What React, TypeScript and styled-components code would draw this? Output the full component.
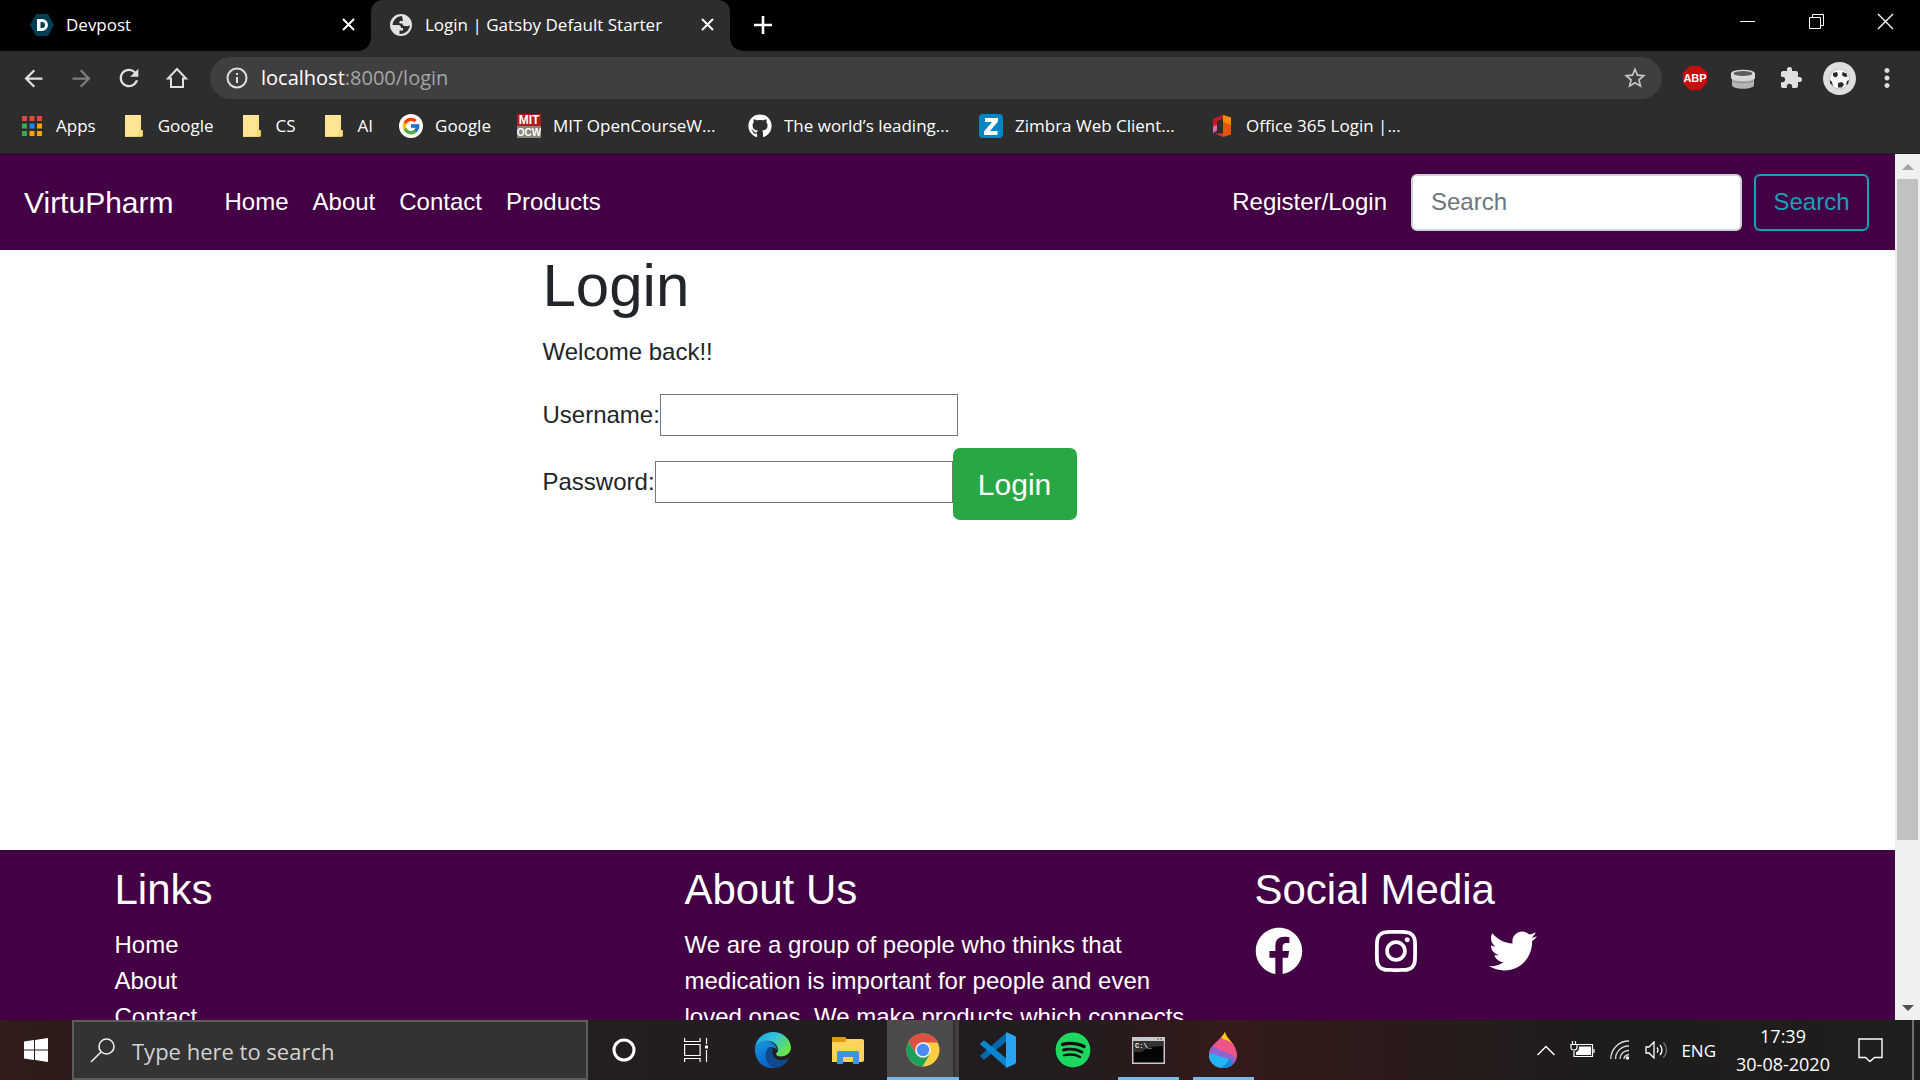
import React from "react";
import styled, { createGlobalStyle, css } from "styled-components";
import { FaFacebook, FaInstagram, FaTwitter, FaGithub, FaSpotify } from "react-icons/fa";
import { FcGoogle } from "react-icons/fc";
import { MdArrowBack, MdArrowForward, MdRefresh, MdStarBorder, MdExtension, MdMoreVert } from "react-icons/md";

const ui = `"Segoe UI", "Open Sans", "Noto Sans", sans-serif`;
const web = `"Liberation Sans", Arial, sans-serif`;

const Global = createGlobalStyle`
  *, *::before, *::after { box-sizing: border-box; }
  body { margin: 0; overflow: hidden; }
  button, input { font: inherit; color: inherit; margin: 0; }
  a { color: inherit; text-decoration: none; }
  svg { display: block; flex: none; }
`;

const Desktop = styled.div`
  display: flex;
  flex-direction: column;
  height: 100vh;
  font-family: ${ui};
`;

const PlainButton = styled.button`
  display: flex;
  align-items: center;
  justify-content: center;
  padding: 0;
  border: 0;
  background: none;
  color: #fff;
`;

/* ---------- tab strip ---------- */
const TabStrip = styled.div`
  display: flex;
  flex: none;
  height: 51px;
  padding-left: 12px;
  background: #000;
  color: #fff;
`;

const Tab = styled.div<{ $active?: boolean }>`
  position: relative;
  display: flex;
  align-items: center;
  gap: 12px;
  width: 359px;
  padding: 0 11px 2px 18px;
  font-size: 17px;
  line-height: 24px;
  white-space: nowrap;
  ${(p) =>
    p.$active &&
    css`
      background: #2d2d2d;
      border-radius: 12px 12px 0 0;
      &::before,
      &::after {
        content: "";
        position: absolute;
        bottom: 0;
        width: 12px;
        height: 12px;
      }
      &::before {
        right: 100%;
        background: radial-gradient(circle at 0 0, transparent 11px, #2d2d2d 12px);
      }
      &::after {
        left: 100%;
        background: radial-gradient(circle at 100% 0, transparent 11px, #2d2d2d 12px);
      }
    `}
`;

const TabTitle = styled.span`
  flex: 1;
`;

const TabClose = styled(PlainButton)`
  width: 24px;
  height: 24px;
`;

const NewTab = styled(PlainButton)`
  width: 42px;
  margin-left: 12px;
  padding-bottom: 2px;
`;

const WindowControls = styled.div`
  display: flex;
  height: 42px;
  margin-left: auto;
`;

const WindowButton = styled(PlainButton)`
  width: 69px;
`;

/* ---------- toolbar ---------- */
const Toolbar = styled.div`
  display: flex;
  flex: none;
  align-items: center;
  height: 54px;
  padding: 0 9px;
  background: #2d2d2d;
`;

const ToolButton = styled(PlainButton)<{ $dim?: boolean }>`
  width: 48px;
  height: 42px;
  color: ${(p) => (p.$dim ? "#7d7d7d" : "#e0e0e0")};
`;

const Omnibox = styled.div`
  display: flex;
  flex: 1;
  align-items: center;
  height: 42px;
  margin: 0 9px;
  padding: 0 3px 0 15px;
  border-radius: 21px;
  background: #3f3f3f;
`;

const Address = styled.a`
  flex: 1;
  padding-left: 12px;
  font-size: 20px;
  line-height: 30px;
  color: #a6a6a6;
  b {
    font-weight: 400;
    color: #fff;
  }
`;

/* ---------- bookmarks ---------- */
const Bookmarks = styled.nav`
  display: flex;
  flex: none;
  gap: 26px;
  height: 49px;
  padding: 0 20px 6px;
  align-items: center;
  background: #2d2d2d;
  border-bottom: 1px solid #222;
  color: #fff;
  font-size: 17px;
  line-height: 24px;
`;

const Bookmark = styled.a<{ $long?: boolean }>`
  display: flex;
  align-items: center;
  gap: 12px;
  white-space: nowrap;
  span {
    width: ${(p) => (p.$long ? "169px" : "auto")};
  }
`;

/* ---------- page ---------- */
const Viewport = styled.div`
  display: flex;
  flex: 1;
  min-height: 0;
  background: #fff;
`;

const Page = styled.div`
  flex: 1;
  overflow: hidden;
  font-family: ${web};
  font-size: 24px;
  line-height: 36px;
  color: #212529;
`;

const Navbar = styled.header`
  display: flex;
  align-items: center;
  min-height: 96px;
  padding: 0 26px 0 24px;
  background: #440044;
  color: #fff;
`;

const Brand = styled.a`
  margin-right: 39px;
  font-size: 30px;
  line-height: 45px;
`;

const NavLinks = styled.nav`
  display: flex;
  flex: 1;
`;

const NavLink = styled.a`
  padding: 12px;
`;

const SearchForm = styled.form`
  display: flex;
  gap: 12px;
  margin-left: 12px;
`;

const SearchInput = styled.input`
  width: 331px;
  height: 57px;
  padding: 0 18px;
  border: 2px solid #ced4da;
  border-radius: 6px;
  background: #fff;
  &::placeholder {
    color: #6c757d;
    opacity: 1;
  }
`;

const SearchButton = styled.button`
  width: 115px;
  height: 57px;
  padding: 0;
  border: 2px solid #17a2b8;
  border-radius: 6px;
  background: transparent;
  color: #17a2b8;
`;

const Main = styled.main`
  width: 100%;
  max-width: 810px;
  min-height: 600px;
  margin: 0 auto;
`;

const Title = styled.h1`
  margin: 0 0 12px;
  font-size: 60px;
  font-weight: 500;
  line-height: 72px;
`;

const Paragraph = styled.p`
  margin: 0 0 24px;
`;

const Field = styled.label`
  display: inline-block;
  margin-bottom: 12px;
`;

const FieldInput = styled.input`
  width: 298px;
  height: 42px;
  padding: 2px;
  border: 1px solid #767676;
  background: #fff;
`;

const LoginButton = styled.button`
  width: 124px;
  height: 72px;
  padding: 0;
  border: 0;
  border-radius: 7px;
  background: #28a745;
  color: #fff;
  font-size: 30px;
  line-height: 45px;
  vertical-align: middle;
`;

const Footer = styled.footer`
  background: #440044;
  color: #fff;
`;

const FooterGrid = styled.div`
  display: grid;
  grid-template-columns: repeat(3, 1fr);
  width: 100%;
  max-width: 1710px;
  margin: 0 auto;
  padding-top: 15px;
`;

const FooterColumn = styled.section`
  padding: 0 22px;
`;

const FooterTitle = styled.h2`
  margin: 0 0 12px;
  font-size: 42px;
  font-weight: 500;
  line-height: 50px;
`;

const FooterList = styled.ul`
  margin: 0;
  padding: 0;
  list-style: none;
`;

const Socials = styled.div`
  display: flex;
  gap: 69px;
`;

/* ---------- scroll bar ---------- */
const Scrollbar = styled.div`
  display: flex;
  flex: none;
  flex-direction: column;
  width: 25px;
  background: #f0f0f0;
`;

const ScrollArrow = styled(PlainButton)<{ $tone: string }>`
  height: 25px;
  color: ${(p) => p.$tone};
`;

const ScrollTrack = styled.div`
  flex: 1;
  padding: 0 2px;
`;

const ScrollThumb = styled.div`
  height: 81%;
  background: #c1c1c1;
`;

/* ---------- taskbar ---------- */
const Taskbar = styled.div`
  display: flex;
  flex: none;
  height: 60px;
  color: #fff;
  background: linear-gradient(90deg, #301d1b 0, #2c1b1a 4%, #231e1f 30%, #211d1e 54%, #2c1b1b 60%, #331b1a 64%, #2b1b1a 72%, #1f1c1c 82%, #1e1e1d 100%);
`;

const StartButton = styled(PlainButton)`
  width: 72px;
`;

const TaskSearch = styled.label`
  display: flex;
  align-items: center;
  gap: 17px;
  width: 516px;
  padding: 0 16px;
  border: 2px solid #5c5c5c;
  background: #333;
`;

const TaskSearchInput = styled.input`
  flex: 1;
  min-width: 0;
  padding: 2px 0 0;
  border: 0;
  background: none;
  font-size: 22px;
  line-height: 30px;
  &::placeholder {
    color: #d2d2d2;
    opacity: 1;
  }
`;

const TaskButton = styled(PlainButton)`
  width: 72px;
`;

const Apps = styled.div`
  display: flex;
  gap: 3px;
  margin-left: 5px;
`;

const AppButton = styled(PlainButton)<{ $state?: "open" | "active" }>`
  width: 72px;
  ${(p) =>
    p.$state === "open" &&
    css`
      background: linear-gradient(#76b9ed, #76b9ed) center bottom / 61px 3px no-repeat;
    `}
  ${(p) =>
    p.$state === "active" &&
    css`
      background: linear-gradient(#76b9ed, #76b9ed) center bottom / 100% 3px no-repeat,
        linear-gradient(90deg, #4d4a4a 66px, #333030 66px, #333030 68px, #413e3e 68px);
    `}
`;

const Tray = styled.div`
  display: flex;
  align-items: center;
  gap: 12px;
  margin-left: auto;
`;

const TrayButton = styled(PlainButton)`
  min-width: 25px;
  height: 60px;
  font-size: 17px;
`;

const Clock = styled(PlainButton)`
  flex-direction: column;
  width: 110px;
  margin-right: 8px;
  font-size: 18px;
  line-height: 28px;
`;

const ShowDesktop = styled(PlainButton)`
  width: 8px;
  height: 60px;
  margin-left: 17px;
  border-left: 2px solid #6d6d6d;
`;

/* ---------- drawings ---------- */
const Cross = ({ size, stroke }: { size: number; stroke: number }) => (
  <svg width={size} height={size} viewBox={`0 0 ${size} ${size}`} stroke="currentColor" strokeWidth={stroke}>
    <path d={`M1 1L${size - 1} ${size - 1}M${size - 1} 1L1 ${size - 1}`} />
  </svg>
);

const DevpostIcon = () => (
  <svg width="24" height="24" viewBox="0 0 24 24">
    <path d="M6 1h12l6 11-6 11H6L0 12z" fill="#003e54" />
    <path d="M7 6h5a6 6 0 0 1 0 12H7zM10.500 9v6H12a3 3 0 0 0 0-6z" fill="#fff" fillRule="evenodd" />
  </svg>
);

const GlobeIcon = () => (
  <svg width="24" height="24" viewBox="0 0 24 24">
    <circle cx="12" cy="12" r="11" fill="#e2e2e2" />
    <path d="M13 3C8 3 4 7 3.500 12h5.500c2 0 3 1 3 3h2v2.500h-3.500V21c5 .5 10-3.500 10.500-9-1 1-2 1.500-3.500 1h-2c-1.500 0-2-1-2-2.500h-3V8h3.500z" fill="#2d2d2d" />
  </svg>
);

const HomeIcon = () => (
  <svg width="24" height="24" viewBox="0 0 24 24" fill="none" stroke="currentColor" strokeWidth="2">
    <path d="M12 3L3 12.500H6V21H18V12.500H21Z" />
  </svg>
);

const InfoIcon = () => (
  <svg width="24" height="24" viewBox="0 0 24 24" fill="none" stroke="#e0e0e0" strokeWidth="2">
    <circle cx="12" cy="12" r="9.500" />
    <path d="M12 11v6M12 7v2" />
  </svg>
);

const AbpIcon = () => (
  <svg width="24" height="24" viewBox="0 0 24 24">
    <path d="M7 0h10l7 7v10l-7 7H7l-7-7V7z" fill="#c70d0d" />
    <text x="12" y="16" fontSize="11" fontWeight="700" textAnchor="middle" fill="#fff" fontFamily="Liberation Sans, sans-serif">ABP</text>
  </svg>
);

const PotIcon = () => (
  <svg width="24" height="24" viewBox="0 0 24 24">
    <path d="M1 10h22v9c0 5-22 5-22 0z" fill="#b5b5b5" />
    <path d="M0 7v5c0 4 24 4 24 0V7z" fill="#d6d6d6" />
    <ellipse cx="12" cy="7.500" rx="12" ry="3.800" fill="#dcdcdc" />
    <ellipse cx="12" cy="7.500" rx="9.500" ry="2.500" fill="#5c5c5c" />
    <path d="M1.500 15c3 2 18 2 21 0" stroke="#8b8b8b" fill="none" />
  </svg>
);

const BallIcon = () => (
  <svg width="33" height="33" viewBox="0 0 33 33">
    <circle cx="16.500" cy="16.500" r="16.500" fill="#dedede" />
    <circle cx="16.500" cy="17" r="10" fill="#f7f7f7" stroke="#c4c4c4" />
    <path d="M10 11l4-1 1 3-2 2.500-3-1.500zM19.500 10l4 1.500 1 3-3 .5-2.500-2zM15 21l4-1 2 2.500-2 3h-4zM7 18l2 2 1 4-3-3zM26 18l-1 4-2 1 1-4z" fill="#2b2b2b" />
  </svg>
);

const AppsIcon = () => {
  const tones = ["#e8453c", "#e8453c", "#e8453c", "#3aa757", "#1a88f0", "#f5a400", "#3aa757", "#f5a400", "#f5a400"];
  return (
    <svg width="24" height="24" viewBox="0 0 24 24">
      {tones.map((tone, i) => (
        <rect key={i} x={2 + (i % 3) * 7.5} y={2 + Math.floor(i / 3) * 7.5} width="5" height="5" fill={tone} />
      ))}
    </svg>
  );
};

const FolderIcon = () => (
  <svg width="24" height="24" viewBox="0 0 24 24">
    <path d="M3 1h16v15l2 1v5l-2 1H3z" fill="#ffe38f" />
    <path d="M3 22.500h14v-5l2-1.500h2v6l-2 1H3z" fill="#e9c04b" />
    <path d="M17.500 17h2.500v5h-2.500z" fill="#ffdf80" />
    <path d="M3 1h13v20H3z" fill="#ffe595" />
  </svg>
);

const GoogleDisc = styled.i`
  display: flex;
  align-items: center;
  justify-content: center;
  width: 24px;
  height: 24px;
  border-radius: 50%;
  background: #fff;
`;

const MitIcon = () => (
  <svg width="24" height="24" viewBox="0 0 24 24" fontFamily="Liberation Sans, sans-serif" fontWeight="700" fontSize="12" textAnchor="middle">
    <path d="M0 0h24v12H0z" fill="#b31b1b" />
    <path d="M0 12h24v12H0z" fill="#8b8579" />
    <text x="12" y="10" fill="#fff">MIT</text>
    <text x="12" y="22" fontSize="10" fill="#fff">OCW</text>
  </svg>
);

const ZimbraIcon = () => (
  <svg width="24" height="24" viewBox="0 0 24 24">
    <rect width="24" height="24" rx="4" fill="#0087c3" />
    <path d="M6 4h13v3.500L11 17h7.500v4H5v-3.500L13 8H6z" fill="#fff" />
  </svg>
);

const OfficeIcon = () => (
  <svg width="24" height="24" viewBox="0 0 24 24">
    <path d="M13 1L3 5v14l4-2.500V7l6-2z" fill="#c3182a" />
    <path d="M3 12v7l4-2.500V11z" fill="#d36bb0" />
    <path d="M13 1l8 2.500v17L13 23V5z" fill="#e6550d" />
    <path d="M13 1l8 2.500V11l-8-3z" fill="#f58a07" />
    <path d="M5 19.500h8V23z" fill="#e0303a" />
  </svg>
);

const Triangle = ({ down }: { down?: boolean }) => (
  <svg width="12" height="6" viewBox="0 0 12 6" fill="currentColor">
    <path d={down ? "M0 0h12L6 6z" : "M0 6h12L6 0z"} />
  </svg>
);

const WindowsIcon = () => (
  <svg width="24" height="24" viewBox="0 0 24 24" fill="#fff">
    <path d="M0 3.400L10 2v9.500H0zM11 1.900L24 0v11.500H11zM0 12.500h10V22L0 20.600zM11 12.500h13V24l-13-1.900z" />
  </svg>
);

const LensIcon = () => (
  <svg width="25" height="25" viewBox="0 0 25 25" fill="none" stroke="#eee" strokeWidth="1.600">
    <circle cx="16.500" cy="8.500" r="7.500" />
    <path d="M11 14L1 24" />
  </svg>
);

const CortanaIcon = () => (
  <svg width="24" height="24" viewBox="0 0 24 24" fill="none" stroke="#fff" strokeWidth="3">
    <circle cx="12" cy="12" r="10" />
  </svg>
);

const TaskViewIcon = () => (
  <svg width="24" height="24" viewBox="0 0 24 24" fill="none" stroke="#fff" strokeWidth="1.200">
    <path d="M.6 0v3.500h15.500V0M.6 6.500h15.500v11H.6zM.6 24v-3.500h15.500V24M22.500 0v6M22.500 12v12" />
    <path d="M21 7.500h3v3h-3z" fill="#fff" stroke="none" />
  </svg>
);

const EdgeIcon = () => (
  <svg width="36" height="36" viewBox="0 0 36 36">
    <defs>
      <linearGradient id="edgeTop" x1="0" y1="0" x2="1" y2="0.600">
        <stop offset="0" stopColor="#1f9be0" />
        <stop offset=".5" stopColor="#33c3dc" />
        <stop offset="1" stopColor="#6be545" />
      </linearGradient>
      <linearGradient id="edgeBody" x1="0" y1="0" x2=".4" y2="1">
        <stop offset="0" stopColor="#1a9ae0" />
        <stop offset="1" stopColor="#0562c4" />
      </linearGradient>
    </defs>
    <path d="M0 16C3 10 9 8 14 9c6 1 9 5 9 9 0 2-2 3-2 4 0 4 15 4 15-7C35 6 27 0 18 0 8 0 1 7 0 16z" fill="url(#edgeTop)" />
    <path d="M0 17C2 9 10 7 16 10c4 2 6 5 6 8-4-5-10-3-11 3-1 7 4 14 10 15C9 38 0 29 0 18z" fill="url(#edgeBody)" />
    <path d="M14 15c-6 5-4 17 5 21 6 0 11-3 14-8 1-1 0-2-1-1-9 4-17-3-14-9 0-1-2-3-4-3z" fill="#114a8b" />
  </svg>
);

const ExplorerIcon = () => (
  <svg width="32" height="27" viewBox="0 0 32 27">
    <path d="M0 1q0-1 1-1h12l3 3v5H0z" fill="#e09c0b" />
    <path d="M0 5h13l2-3h15q2 0 2 2v19q0 2-2 2H0z" fill="#ffd35c" />
    <path d="M5 27V16q0-2 2-2h18q2 0 2 2v11h-6v-7H11v7z" fill="#3b96dd" />
  </svg>
);

const ChromeIcon = () => (
  <svg width="34" height="34" viewBox="0 0 34 34">
    <circle cx="17" cy="17" r="16.500" fill="#ffcd40" />
    <path d="M2.700 8.800L9.500 20.500 17 17V9.500H31.700A16.500 16.500 0 0 0 2.700 8.800z" fill="#dd5144" />
    <path d="M2.700 8.800L9.500 20.500 17 17 24.300 20.500 16.500 33.500A16.500 16.500 0 0 1 2.700 8.800z" fill="#1aa15f" />
    <circle cx="17" cy="17" r="7.800" fill="#f4f4f4" />
    <circle cx="17" cy="17" r="6.200" fill="#4c8bf5" />
  </svg>
);

const CodeIcon = () => (
  <svg width="36" height="36" viewBox="0 0 36 36">
    <path d="M0 24l3 3q1 1 2 0L27 9V0L1 23q-1 0-1 1z" fill="#0069ad" />
    <path d="M0 12l3-3q1-1 2 0l22 18v9L1 13q-1 0-1-1z" fill="#0a86d1" />
    <path d="M26 0l9 4q1 1 1 2v24q0 1-1 2l-9 4z" fill="#27a4f2" />
  </svg>
);

const SpotifyDisc = styled.i`
  display: flex;
  border-radius: 50%;
  background: #111;
  color: #1ed760;
`;

const TerminalIcon = () => (
  <svg width="33" height="27" viewBox="0 0 33 27">
    <path d="M0 0h33v27H0z" fill="#c9c9cd" />
    <path d="M1.500 4h30v21.500h-30z" fill="#050505" />
    <path d="M1.500 4h30v5q-16 0-22 6h-8z" fill="#333" />
    <path d="M25 2h2M28 2h2" stroke="#555" />
    <text x="3" y="11" fontSize="7" fontWeight="700" fill="#eee" fontFamily="Liberation Mono, monospace">C:\_</text>
  </svg>
);

const PaintIcon = () => (
  <svg width="28" height="36" viewBox="0 0 28 36">
    <defs>
      <clipPath id="drop">
        <path d="M16 0c1 7 12 12 12 23a14 13 0 0 1-28 0C0 13 12 8 16 0z" />
      </clipPath>
    </defs>
    <g clipPath="url(#drop)">
      <path d="M0 0h28v36H0z" fill="#ee5487" />
      <path d="M8 0h20v18q-3-8-14-11z" fill="#fccf0a" />
      <path d="M0 15q4-3 6 0c5 5 18 4 22 14v7H0z" fill="#9162ce" />
      <path d="M0 22c5-2 8 2 13 3s10 1 9 11H0z" fill="#24b4f1" />
      <path d="M10 36q9-3 10-10l8 10z" fill="#1688dc" />
    </g>
  </svg>
);

const BatteryIcon = () => (
  <svg width="25" height="18" viewBox="0 0 25 18" fill="none" stroke="#fff" strokeWidth="1.200">
    <path d="M7 3.500h15.500v12H4V10M24 8v4" />
    <path d="M9 5.500h12v8.500H6v-3q3-1 3-4z" fill="#fff" stroke="none" />
    <path d="M2.500 0v3M5.500 0v3M1 3.500h6v3Q7 9 4 9T1 6.500z" />
  </svg>
);

const WifiIcon = () => (
  <svg width="20" height="20" viewBox="0 0 20 20" fill="none" stroke="#ddd" strokeWidth="1.300">
    <path d="M.8 19A18 18 0 0 1 19 1M5.500 19A13 13 0 0 1 19 6M10 19A8.500 8.500 0 0 1 19 10.500M14 19Q14 15.500 19 14.500" />
    <circle cx="17.500" cy="18" r="1.700" fill="#fff" stroke="none" />
  </svg>
);

const VolumeIcon = () => (
  <svg width="23" height="18" viewBox="0 0 23 18" fill="none" stroke="#fff" strokeWidth="1.300">
    <path d="M1 6h3l5-5v16l-5-5H1zM12 6.500q2 2.500 0 5M15 4q4 5 0 10" />
    <path d="M18.500 1.500q6 7.500 0 15" stroke="#777" />
  </svg>
);

const NoticeIcon = () => (
  <svg width="25" height="25" viewBox="0 0 25 25" fill="none" stroke="#fff" strokeWidth="1.400">
    <path d="M1 1h23v18.500h-7.500L12 23.500 7.500 19.500H1z" />
  </svg>
);

const bookmarks = [
  { label: "Apps", icon: <AppsIcon /> },
  { label: "Google", icon: <FolderIcon /> },
  { label: "CS", icon: <FolderIcon /> },
  { label: "AI", icon: <FolderIcon /> },
  { label: "Google", icon: <GoogleDisc><FcGoogle size={20} /></GoogleDisc> },
  { label: "MIT OpenCourseW...", icon: <MitIcon />, long: true },
  { label: "The world’s leading...", icon: <FaGithub size={24} />, long: true },
  { label: "Zimbra Web Client...", icon: <ZimbraIcon />, long: true },
  { label: "Office 365 Login |...", icon: <OfficeIcon />, long: true },
];

const apps: { name: string; icon: React.ReactNode; state?: "open" | "active" }[] = [
  { name: "Edge", icon: <EdgeIcon /> },
  { name: "File Explorer", icon: <ExplorerIcon /> },
  { name: "Chrome", icon: <ChromeIcon />, state: "active" },
  { name: "Visual Studio Code", icon: <CodeIcon /> },
  { name: "Spotify", icon: <SpotifyDisc><FaSpotify size={36} /></SpotifyDisc> },
  { name: "Command Prompt", icon: <TerminalIcon />, state: "open" },
  { name: "Paint 3D", icon: <PaintIcon />, state: "open" },
];

export default function App() {
  return (
    <Desktop>
      <Global />
      <TabStrip>
        <Tab>
          <DevpostIcon />
          <TabTitle>Devpost</TabTitle>
          <TabClose aria-label="Close tab"><Cross size={13} stroke={2} /></TabClose>
        </Tab>
        <Tab $active>
          <GlobeIcon />
          <TabTitle>Login | Gatsby Default Starter</TabTitle>
          <TabClose aria-label="Close tab"><Cross size={13} stroke={2} /></TabClose>
        </Tab>
        <NewTab aria-label="New tab">
          <svg width="18" height="18" viewBox="0 0 18 18" stroke="#fff" strokeWidth="2.600">
            <path d="M9 0v18M0 9h18" />
          </svg>
        </NewTab>
        <WindowControls>
          <WindowButton aria-label="Minimize">
            <svg width="15" height="15" viewBox="0 0 15 15" fill="#fff"><path d="M0 7h15v1H0z" /></svg>
          </WindowButton>
          <WindowButton aria-label="Restore">
            <svg width="15" height="15" viewBox="0 0 15 15" fill="none" stroke="#fff">
              <path d="M.5 3.500h11v11H.5zM3.500 3.500v-3h11v11h-3" />
            </svg>
          </WindowButton>
          <WindowButton aria-label="Close"><Cross size={17} stroke={1.4} /></WindowButton>
        </WindowControls>
      </TabStrip>

      <Toolbar>
        <ToolButton aria-label="Back"><MdArrowBack size={27} /></ToolButton>
        <ToolButton aria-label="Forward" $dim><MdArrowForward size={27} /></ToolButton>
        <ToolButton aria-label="Reload"><MdRefresh size={28} /></ToolButton>
        <ToolButton aria-label="Home"><HomeIcon /></ToolButton>
        <Omnibox>
          <InfoIcon />
          <Address href="#"><b>localhost</b>:8000/login</Address>
          <ToolButton aria-label="Bookmark this tab"><MdStarBorder size={26} color="#c4c4c4" /></ToolButton>
        </Omnibox>
        <ToolButton aria-label="Adblock"><AbpIcon /></ToolButton>
        <ToolButton aria-label="Extension"><PotIcon /></ToolButton>
        <ToolButton aria-label="Extensions"><MdExtension size={24} /></ToolButton>
        <ToolButton aria-label="Profile"><BallIcon /></ToolButton>
        <ToolButton aria-label="Menu"><MdMoreVert size={30} /></ToolButton>
      </Toolbar>

      <Bookmarks>
        {bookmarks.map((b, i) => (
          <Bookmark key={i} href="#" $long={b.long}>
            {b.icon}
            <span>{b.label}</span>
          </Bookmark>
        ))}
      </Bookmarks>

      <Viewport>
        <Page>
          <Navbar>
            <Brand href="#">VirtuPharm</Brand>
            <NavLinks>
              <NavLink href="#">Home</NavLink>
              <NavLink href="#">About</NavLink>
              <NavLink href="#">Contact</NavLink>
              <NavLink href="#">Products</NavLink>
            </NavLinks>
            <NavLink href="#">Register/Login</NavLink>
            <SearchForm onSubmit={(e) => e.preventDefault()}>
              <SearchInput type="search" placeholder="Search" aria-label="Search" />
              <SearchButton type="submit">Search</SearchButton>
            </SearchForm>
          </Navbar>

          <Main>
            <Title>Login</Title>
            <Paragraph>Welcome back!!</Paragraph>
            <form onSubmit={(e) => e.preventDefault()}>
              <Field>Username:<FieldInput type="text" name="username" /></Field>
              <br />
              <Field>Password:<FieldInput type="password" name="password" /></Field>
              <LoginButton type="submit">Login</LoginButton>
            </form>
          </Main>

          <Footer>
            <FooterGrid>
              <FooterColumn>
                <FooterTitle>Links</FooterTitle>
                <FooterList>
                  <li><a href="#">Home</a></li>
                  <li><a href="#">About</a></li>
                  <li><a href="#">Contact</a></li>
                </FooterList>
              </FooterColumn>
              <FooterColumn>
                <FooterTitle>About Us</FooterTitle>
                <Paragraph>
                  We are a group of people who thinks that medication is important for people and even loved ones. We make
                  products which connects
                </Paragraph>
              </FooterColumn>
              <FooterColumn>
                <FooterTitle>Social Media</FooterTitle>
                <Socials>
                  <a href="#" aria-label="Facebook"><FaFacebook size={48} /></a>
                  <a href="#" aria-label="Instagram"><FaInstagram size={48} /></a>
                  <a href="#" aria-label="Twitter"><FaTwitter size={48} /></a>
                </Socials>
              </FooterColumn>
            </FooterGrid>
          </Footer>
        </Page>
        <Scrollbar>
          <ScrollArrow aria-label="Scroll up" $tone="#a3a3a3"><Triangle /></ScrollArrow>
          <ScrollTrack><ScrollThumb /></ScrollTrack>
          <ScrollArrow aria-label="Scroll down" $tone="#505050"><Triangle down /></ScrollArrow>
        </Scrollbar>
      </Viewport>

      <Taskbar>
        <StartButton aria-label="Start"><WindowsIcon /></StartButton>
        <TaskSearch>
          <LensIcon />
          <TaskSearchInput type="text" placeholder="Type here to search" aria-label="Type here to search" />
        </TaskSearch>
        <TaskButton aria-label="Cortana"><CortanaIcon /></TaskButton>
        <TaskButton aria-label="Task view"><TaskViewIcon /></TaskButton>
        <Apps>
          {apps.map((a) => (
            <AppButton key={a.name} aria-label={a.name} $state={a.state}>{a.icon}</AppButton>
          ))}
        </Apps>
        <Tray>
          <TrayButton aria-label="Show hidden icons">
            <svg width="18" height="11" viewBox="0 0 18 11" fill="none" stroke="#fff" strokeWidth="1.500">
              <path d="M.5 10L9 1.500 17.500 10" />
            </svg>
          </TrayButton>
          <TrayButton aria-label="Battery"><BatteryIcon /></TrayButton>
          <TrayButton aria-label="Network"><WifiIcon /></TrayButton>
          <TrayButton aria-label="Volume"><VolumeIcon /></TrayButton>
          <TrayButton>ENG</TrayButton>
          <Clock><span>17:39</span><span>30-08-2020</span></Clock>
          <TrayButton aria-label="Notifications"><NoticeIcon /></TrayButton>
          <ShowDesktop aria-label="Show desktop" />
        </Tray>
      </Taskbar>
    </Desktop>
  );
}
